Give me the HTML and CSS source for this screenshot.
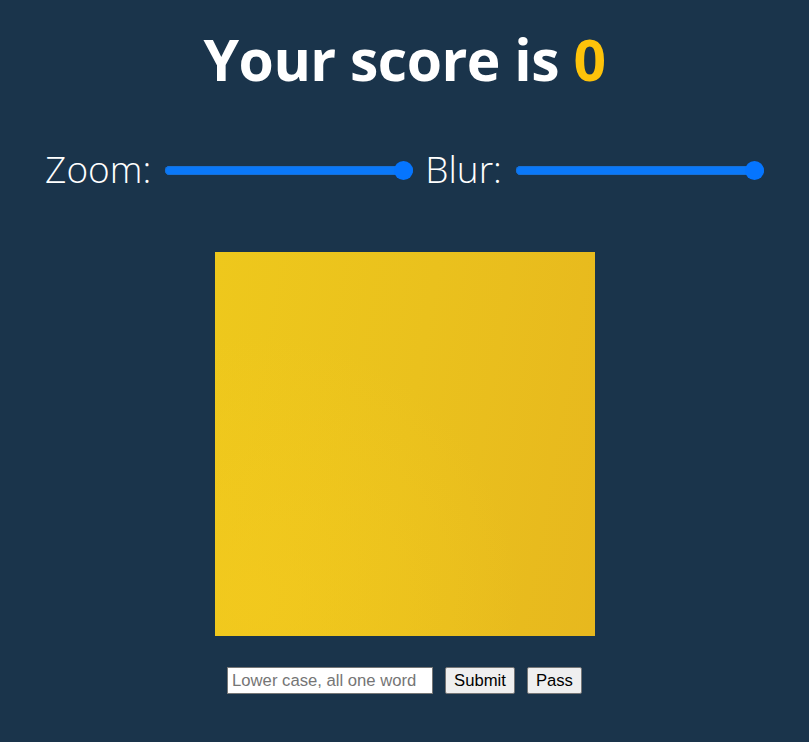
FILE: index.html
```html
<!DOCTYPE html>
<html>
<head>
<meta charset="utf-8">
<link rel="stylesheet" href="styles.css">
</head>
<body>
<div class="page">
  <h1 class="title">Your score is <span class="score">0</span></h1>
  <div class="controls">
    <label class="ctl">Zoom: <input class="range" type="range" min="0" max="100" value="100"></label>
    <label class="ctl">Blur: <input class="range" type="range" min="0" max="100" value="100"></label>
  </div>
  <div class="picture"></div>
  <form class="guess" onsubmit="return false">
    <input class="answer" type="text" placeholder="Lower case, all one word">
    <button class="btn" type="button">Submit</button>
    <button class="btn" type="button">Pass</button>
  </form>
</div>
</body>
</html>
```
FILE: styles.css
```css
html, body {
  margin: 0;
  padding: 0;
  background: #1a344b;
  height: 100%;
}
.page {
  display: flex;
  flex-direction: column;
  align-items: center;
  font-family: "Open Sans", "Noto Sans", sans-serif;
  color: #fff;
}
.title {
  margin: 21px 0 0;
  font-size: 57px;
  font-weight: 700;
  line-height: 76px;
  letter-spacing: -0.5px;
}
.score {
  color: #fec30a;
}
.controls {
  display: flex;
  gap: 12px;
  margin-top: 41px;
  height: 60px;
  align-items: center;
}
.ctl {
  display: flex;
  align-items: center;
  gap: 14px;
  font-size: 37px;
  font-weight: 300;
}
.range {
  -webkit-appearance: none;
  appearance: none;
  width: 248px;
  height: 18px;
  margin: 4px 0 0;
  background: transparent;
}
.range::-webkit-slider-runnable-track {
  height: 9px;
  border-radius: 5px;
  background: #0a78f8;
  box-shadow: inset 0 0 0 1px #1570d8;
}
.range::-webkit-slider-thumb {
  -webkit-appearance: none;
  appearance: none;
  width: 19px;
  height: 19px;
  margin-top: -5px;
  border-radius: 50%;
  background: #0575ff;
  border: none;
}
.picture {
  margin-top: 54px;
  width: 380px;
  height: 384px;
  background:
    radial-gradient(circle at 10% 90%, rgba(245, 203, 30, 0.6), rgba(245, 203, 30, 0) 55%),
    linear-gradient(100deg, #eec81c 0%, #eac11d 50%, #e7b81e 100%);
}
.guess {
  display: flex;
  align-items: center;
  gap: 12px;
  margin: 31px 0 0;
  font-family: "Liberation Sans", Arial, sans-serif;
}
.answer {
  width: 206px;
  height: 27px;
  box-sizing: border-box;
  padding: 1px 4px;
  font-family: "Liberation Sans", Arial, sans-serif;
  font-size: 16.67px;
  border: 1px solid #767676;
  border-radius: 0;
  background: #fff;
  color: #000;
}
.answer::placeholder {
  color: #757575;
}
.btn {
  height: 27px;
  padding: 1px 8px;
  font-family: "Liberation Sans", Arial, sans-serif;
  font-size: 16.67px;
  color: #000;
  background: #efefef;
  border: 1px solid #767676;
  border-radius: 2px;
}
```
